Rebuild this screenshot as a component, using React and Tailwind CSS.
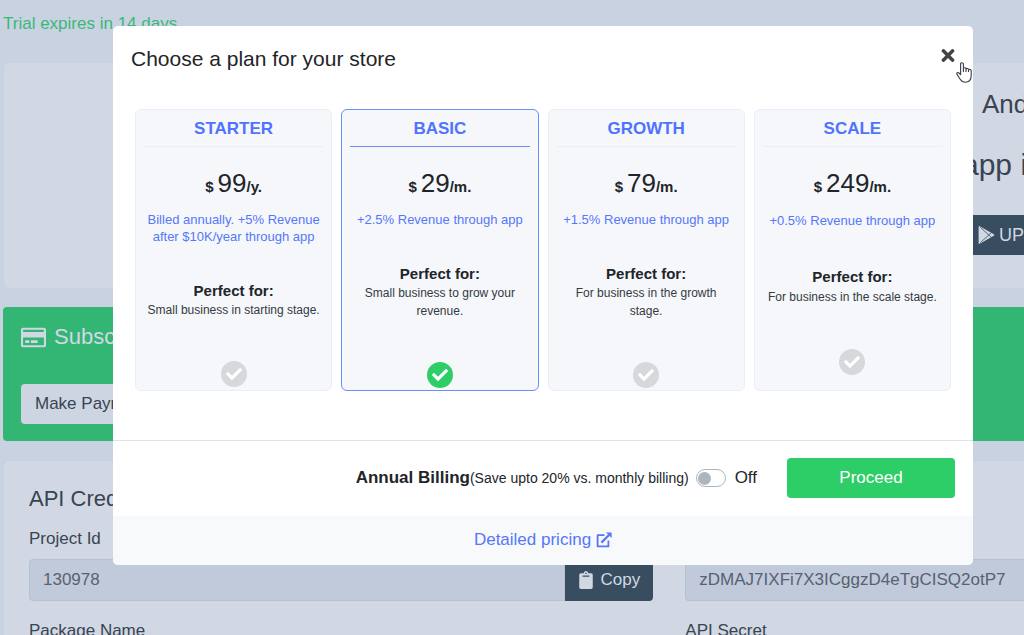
import { useState } from "react";
import { FaCheck, FaClipboard, FaRegCreditCard, FaTimes } from "react-icons/fa";

const PLANS = [
  {
    id: "starter",
    name: "STARTER",
    price: "99",
    unit: "/y.",
    fee: "Billed annually. +5% Revenue after $10K/year through app",
    audience: "Small business in starting stage.",
  },
  {
    id: "basic",
    name: "BASIC",
    price: "29",
    unit: "/m.",
    fee: "+2.5% Revenue through app",
    audience: "Small business to grow your revenue.",
  },
  {
    id: "growth",
    name: "GROWTH",
    price: "79",
    unit: "/m.",
    fee: "+1.5% Revenue through app",
    audience: "For business in the growth stage.",
  },
  {
    id: "scale",
    name: "SCALE",
    price: "249",
    unit: "/m.",
    fee: "+0.5% Revenue through app",
    audience: "For business in the scale stage.",
    roomy: true,
  },
];

function PlanCard({ plan, selected, onSelect }) {
  return (
    <label
      className={`flex flex-col items-center rounded-md border bg-[#f5f7fb] px-2 pb-[2px] text-center ${
        selected ? "border-[#6f8df8]" : "border-[#e9effa]"
      }`}
    >
      <span
        className={`w-full border-b pt-[5px] pb-[3px] text-[17px] leading-7 font-bold text-[#4f73ff] ${
          selected ? "border-[#6f8df8]" : "border-[#e9effa]"
        }`}
      >
        {plan.name}
      </span>
      <span className="mt-5 flex items-baseline leading-8 font-bold text-[#212529]">
        <span className="mr-1 text-[15px] leading-8">$</span>
        <span className="text-[26px] leading-8 font-normal">{plan.price}</span>
        <span className="text-[15px] leading-8">{plan.unit}</span>
      </span>
      <span
        className={`mt-2 text-[13px] text-[#5577f8] ${
          plan.roomy ? "leading-5" : "leading-[17px]"
        }`}
      >
        {plan.fee}
      </span>
      <span className="mt-9 text-[15px] leading-5 font-bold text-[#212529]">
        Perfect for:
      </span>
      <span
        className={`px-[2px] text-xs text-[#343a40] ${
          plan.roomy ? "leading-5" : "leading-[18px]"
        }`}
      >
        {plan.audience}
      </span>
      <span className="mt-[42px] grid place-items-center">
        <input
          type="radio"
          name="plan"
          value={plan.id}
          aria-label={plan.name}
          checked={selected}
          onChange={onSelect}
          className="col-start-1 row-start-1 size-[26px] appearance-none rounded-full bg-[#d6d8db] checked:bg-[#2dce68]"
        />
        <FaCheck className="pointer-events-none z-10 col-start-1 row-start-1 size-4 text-white" />
      </span>
    </label>
  );
}

function PlayStoreIcon() {
  return (
    <svg viewBox="0 0 17 18" className="h-[18px] w-[17px] shrink-0" aria-hidden="true">
      <path
        d="M.6 .7C.6 .1 1.2 0 1.7 .3L15.8 8.2C16.4 8.6 16.4 9.4 15.8 9.8L1.7 17.7C1.2 18 .6 17.9 .6 17.3Z"
        fill="currentColor"
      />
      <path
        d="M2.4 1.4L13.2 11.2M2.4 16.6L13.2 6.8"
        fill="none"
        stroke="#384e60"
        strokeWidth="0.8"
      />
    </svg>
  );
}

function ExternalLinkIcon() {
  return (
    <svg
      viewBox="0 0 16 16"
      className="size-4"
      fill="none"
      stroke="currentColor"
      strokeWidth="1.8"
      aria-hidden="true"
    >
      <path d="M8.5 3.2H1.6V14.4H12.4V8.5" strokeLinejoin="round" />
      <path d="M5.4 10.6L13 3" strokeWidth="2.2" />
      <path d="M10 0.4H15.6V6Z" fill="currentColor" stroke="none" />
    </svg>
  );
}

function HandCursor() {
  return (
    <svg
      viewBox="0 0 16 21"
      className="absolute top-9 right-px z-10 h-[21px] w-4"
      aria-hidden="true"
    >
      <path
        d="M4.6 1.9C4.6 .4 7.4 .4 7.4 1.9V6.1C8.2 5.4 9.8 5.7 10 6.7C11 6.1 12.3 6.5 12.5 7.5C13.7 7 15.2 7.6 15.2 9V13.5C15.2 17.7 12.7 20.2 9.3 20.2C6.8 20.2 5.4 19 4.2 17.2L1 12.4C.2 10.9 1.9 9.9 3 11L4.6 12.7Z"
        fill="#fff"
        stroke="#3b3d4d"
        strokeWidth="1.1"
        strokeLinejoin="round"
      />
      <path
        d="M7.4 6V10M10 6.8V10M12.5 7.6V10"
        fill="none"
        stroke="#3b3d4d"
        strokeWidth="1.1"
      />
    </svg>
  );
}

function Dashboard() {
  return (
    <main className="min-h-screen pt-2.5 pl-[3px] text-[17px] text-[#384452]">
      <p className="leading-[27px] text-[#3bb878]">Trial expires in 14 days</p>

      <section className="mt-[25px] flex h-[227px] justify-end overflow-hidden rounded-l-md border border-r-0 border-[#c3d2e6] bg-[#d1d8e4] pt-[21px]">
        <div className="w-[62px] whitespace-nowrap">
          <h2 className="pl-5 text-[26px] leading-10">Android</h2>
          <p className="mt-[21px] text-[30px] leading-10">app is</p>
          <button
            type="button"
            className="mt-[30px] flex h-10 items-center gap-1 bg-[#384e60] pr-4 pl-4 text-lg text-[#d1d8e4]"
          >
            <PlayStoreIcon />
            UP
          </button>
        </div>
      </section>

      <section className="mt-[18px] rounded-l-sm bg-[#33b573] px-[18px] pt-4 pb-[17px]">
        <h2 className="flex items-center gap-2 text-[22px] leading-7 text-[#d1d8e4]">
          <FaRegCreditCard className="size-[25px]" />
          Subscription
        </h2>
        <button
          type="button"
          className="mt-[33px] h-10 rounded-sm bg-[#cdd5e3] px-3.5 text-[#384452]"
        >
          Make Payment
        </button>
      </section>

      <section className="mt-[19px] rounded-l-md border border-r-0 border-[#c3d2e6] bg-[#d1d8e4] pt-6 pl-[25px]">
        <h2 className="text-[22px] leading-7">API Credentials</h2>
        <div className="grid grid-cols-[minmax(0,625fr)_minmax(0,339fr)] gap-x-8">
          <div>
            <label htmlFor="project-id" className="mt-3 block leading-[27px]">
              Project Id
            </label>
            <div className="mt-[7px] flex">
              <input
                id="project-id"
                readOnly
                value="130978"
                className="h-[42px] min-w-0 flex-1 rounded-l-sm border border-[#b5c1d1] bg-[#c1cada] px-[13px] text-[#566273]"
              />
              <button
                type="button"
                className="flex w-[88px] items-center justify-center gap-2 rounded-r-sm bg-[#384e60] text-[#d1d8e4]"
              >
                <FaClipboard className="h-[18px] w-3.5" />
                Copy
              </button>
            </div>
            <p className="mt-4 leading-[27px]">Package Name</p>
          </div>
          <div>
            <label htmlFor="api-key" className="mt-3 block leading-[27px]">
              API Key
            </label>
            <input
              id="api-key"
              readOnly
              value="zDMAJ7IXFi7X3ICggzD4eTgCISQ2otP7"
              className="mt-[7px] h-[42px] w-full rounded-l-sm border border-r-0 border-[#b5c1d1] bg-[#c1cada] pl-[13px] text-[#566273]"
            />
            <p className="mt-4 leading-[27px]">API Secret</p>
          </div>
        </div>
      </section>
    </main>
  );
}

function PlanDialog() {
  const [plan, setPlan] = useState("basic");
  const [annual, setAnnual] = useState(false);

  return (
    <div className="fixed inset-0 z-20 flex items-start pt-[26px] pr-[51px] pl-[113px]">
      <div
        role="dialog"
        aria-modal="true"
        aria-labelledby="plan-title"
        className="relative flex-1 rounded-[5px] bg-white text-[#212529]"
      >
        <header className="flex items-start justify-between px-[18px] pt-[17px]">
          <h1 id="plan-title" className="text-[21px] leading-8">
            Choose a plan for your store
          </h1>
          <button type="button" aria-label="Close" className="mt-[3px] text-[#444]">
            <FaTimes className="h-[19px] w-[14px]" />
          </button>
        </header>
        <HandCursor />

        <div className="mt-[34px] grid grid-cols-4 gap-[9px] px-[22px] pb-[49px]">
          {PLANS.map((item) => (
            <PlanCard
              key={item.id}
              plan={item}
              selected={item.id === plan}
              onSelect={() => setPlan(item.id)}
            />
          ))}
        </div>

        <div className="flex items-center justify-end border-t border-[#dee4ea] px-[18px] pt-[17px] pb-[18px]">
          <label htmlFor="annual" className="text-[17px] leading-7 font-bold">
            Annual Billing
            <span className="text-sm font-normal">
              (Save upto 20% vs. monthly billing)
            </span>
          </label>
          <input
            id="annual"
            type="checkbox"
            role="switch"
            checked={annual}
            onChange={(event) => setAnnual(event.target.checked)}
            className="mr-[9px] ml-[7px] flex h-[18px] w-[30px] appearance-none items-center rounded-full border border-[#adb5bd] bg-white px-px before:size-[13px] before:rounded-full before:bg-[#adb5bd] checked:justify-end"
          />
          <span className="text-[17px] leading-7">{annual ? "On" : "Off"}</span>
          <button
            type="button"
            className="ml-[30px] h-10 w-[168px] rounded-sm bg-[#2dce68] text-[17px] text-white"
          >
            Proceed
          </button>
        </div>

        <footer className="flex justify-center rounded-b-[5px] bg-[#f8f9fb] pt-2.5 pb-3">
          <a
            href="#pricing"
            className="flex items-center gap-[5px] text-[17px] leading-[27px] text-[#5577f8]"
          >
            Detailed pricing
            <ExternalLinkIcon />
          </a>
        </footer>
      </div>
    </div>
  );
}

export default function App() {
  return (
    <div className="h-screen overflow-hidden bg-[#c9d2e1] font-['Liberation_Sans',Arial,sans-serif]">
      <Dashboard />
      <PlanDialog />
    </div>
  );
}
